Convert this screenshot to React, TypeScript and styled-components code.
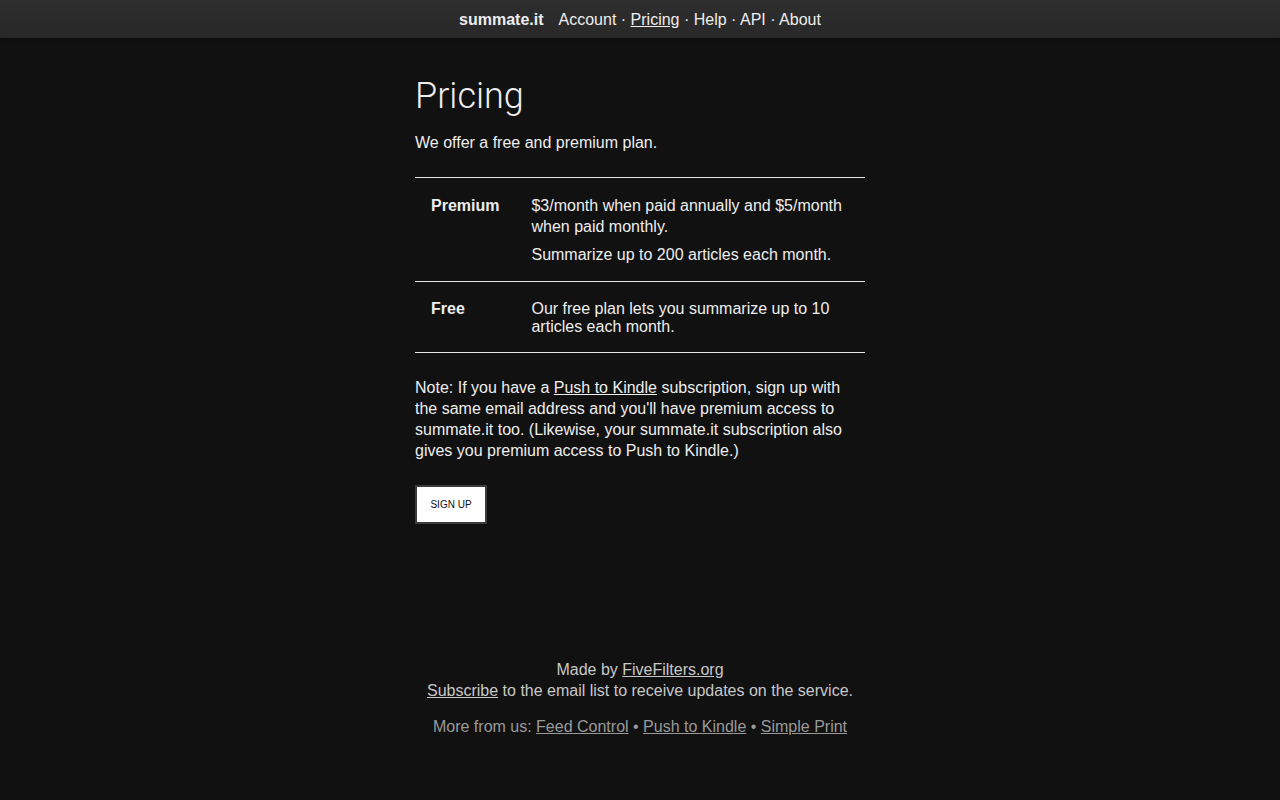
import styled, { createGlobalStyle } from "styled-components";

const GlobalStyle = createGlobalStyle`
  html, body {
    margin: 0;
    padding: 0;
    background: #111111;
    color: #eeeeee;
    font-family: "Liberation Sans", Arial, sans-serif;
    font-size: 16px;
    line-height: 21px;
  }
  a {
    color: inherit;
  }
`;

const TopBar = styled.header`
  height: 38px;
  background: linear-gradient(#2e2e2e, #282828);
  display: flex;
  justify-content: center;
  align-items: center;
  gap: 15px;
  box-shadow: 0 1px 2px rgba(0, 0, 0, 0.5);
`;

const Brand = styled.strong`
  font-weight: bold;
  color: #eeeeee;
`;

const NavLinks = styled.nav`
  color: #eeeeee;
`;

const NavLink = styled.a<{ $active?: boolean }>`
  text-decoration: ${(p) => (p.$active ? "underline" : "none")};
`;

const Main = styled.main`
  width: 450px;
  margin: 37px auto 0;
`;

const Title = styled.h1`
  font-family: Roboto, "Liberation Sans", sans-serif;
  font-weight: 300;
  font-size: 36px;
  line-height: 43px;
  margin: 0 0 14px;
  color: #eeeeee;
`;

const Para = styled.p`
  margin: 0 0 24px;
`;

const PlanTable = styled.table`
  width: 100%;
  border-collapse: collapse;
  margin-bottom: 24px;
`;

const PlanRow = styled.tr`
  border-top: 1px solid #e6e6e6;
  border-bottom: 1px solid #e6e6e6;
`;

const PlanName = styled.th<{ $top: number }>`
  width: 68px;
  text-align: left;
  vertical-align: top;
  padding: ${(p) => p.$top}px 16px 16px 16px;
  font-weight: bold;
  line-height: 21px;
`;

const PlanDesc = styled.td<{ $tight?: boolean }>`
  vertical-align: top;
  padding: ${(p) => (p.$tight ? "18px" : "17px")} 16px 16px 16px;
  line-height: ${(p) => (p.$tight ? "18px" : "21px")};
`;

const CellPara = styled.p`
  margin: 0 0 7px;
  &:last-child {
    margin-bottom: 0;
  }
`;

const SignUp = styled.button`
  background: #ffffff;
  color: #111111;
  border: 2px solid #3c3c3c;
  font-family: "Liberation Sans", Arial, sans-serif;
  font-size: 10px;
  text-transform: uppercase;
  width: 72px;
  height: 39px;
  padding: 0;
  cursor: pointer;
`;

const Footer = styled.footer`
  margin-top: 135px;
  text-align: center;
  color: #c8c8c8;
  padding-bottom: 60px;
`;

const FooterLine = styled.div``;

const MoreFrom = styled.p`
  margin: 15px 0 0;
  color: #9a9a9a;
`;

export default function App() {
  return (
    <>
      <GlobalStyle />
      <TopBar>
        <Brand>summate.it</Brand>
        <NavLinks>
          <NavLink href="#">Account</NavLink> ·{" "}
          <NavLink href="#" $active>
            Pricing
          </NavLink>{" "}
          · <NavLink href="#">Help</NavLink> · <NavLink href="#">API</NavLink> ·{" "}
          <NavLink href="#">About</NavLink>
        </NavLinks>
      </TopBar>

      <Main>
        <Title>Pricing</Title>
        <Para>We offer a free and premium plan.</Para>

        <PlanTable>
          <tbody>
            <PlanRow>
              <PlanName $top={17}>Premium</PlanName>
              <PlanDesc>
                <CellPara>
                  $3/month when paid annually and $5/month when paid monthly.
                </CellPara>
                <CellPara>Summarize up to 200 articles each month.</CellPara>
              </PlanDesc>
            </PlanRow>
            <PlanRow>
              <PlanName $top={16}>Free</PlanName>
              <PlanDesc $tight>
                Our free plan lets you summarize up to 10 articles each month.
              </PlanDesc>
            </PlanRow>
          </tbody>
        </PlanTable>

        <Para>
          Note: If you have a <a href="#">Push to Kindle</a> subscription, sign
          up with the same email address and you'll have premium access to
          summate.it too. (Likewise, your summate.it subscription also gives you
          premium access to Push to Kindle.)
        </Para>

        <SignUp type="button">Sign up</SignUp>
      </Main>

      <Footer>
        <FooterLine>
          Made by <a href="#">FiveFilters.org</a>
        </FooterLine>
        <FooterLine>
          <a href="#">Subscribe</a> to the email list to receive updates on the
          service.
        </FooterLine>
        <MoreFrom>
          More from us: <a href="#">Feed Control</a> •{" "}
          <a href="#">Push to Kindle</a> • <a href="#">Simple Print</a>
        </MoreFrom>
      </Footer>
    </>
  );
}
